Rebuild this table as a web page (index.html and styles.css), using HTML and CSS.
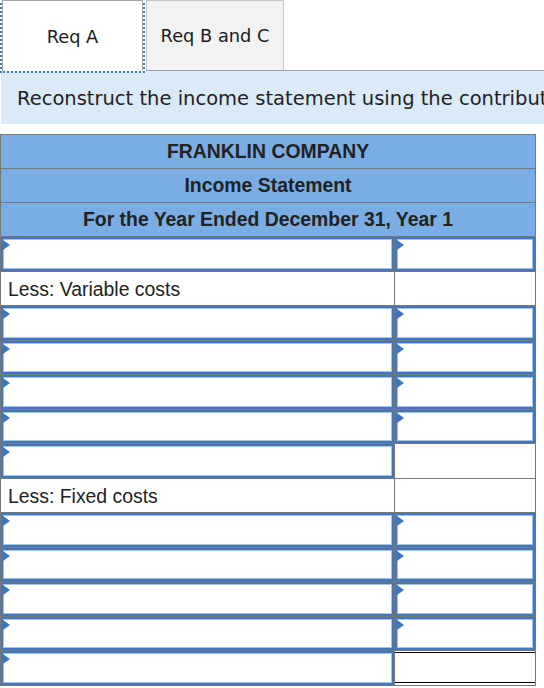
FILE: index.html
```html
<!DOCTYPE html>
<html>
<head>
<meta charset="utf-8">
<link rel="stylesheet" href="styles.css">
</head>
<body>
<div class="tabs">
  <div class="tab tab-active">Req A</div>
  <div class="tab tab-idle">Req B and C</div>
  <div class="tab-rest"></div>
</div>
<div class="info">Reconstruct the income statement using the contribution margin approach.</div>
<table class="stmt">
  <colgroup><col class="c1"><col class="c2"></colgroup>
  <tr class="hd"><td colspan="2">FRANKLIN COMPANY</td></tr>
  <tr class="hd"><td colspan="2">Income Statement</td></tr>
  <tr class="hd"><td colspan="2">For the Year Ended December 31, Year 1</td></tr>
  <tr><td class="in"><div class="box"></div><span class="tri"></span></td><td class="in"><div class="box"></div><span class="tri"></span></td></tr>
  <tr><td class="lbl">Less: Variable costs</td><td></td></tr>
  <tr><td class="in"><div class="box"></div><span class="tri"></span></td><td class="in"><div class="box"></div><span class="tri"></span></td></tr>
  <tr><td class="in"><div class="box"></div><span class="tri"></span></td><td class="in"><div class="box"></div><span class="tri"></span></td></tr>
  <tr><td class="in"><div class="box"></div><span class="tri"></span></td><td class="in"><div class="box"></div><span class="tri"></span></td></tr>
  <tr><td class="in"><div class="box"></div><span class="tri"></span></td><td class="in"><div class="box"></div><span class="tri"></span></td></tr>
  <tr><td class="in"><div class="box"></div><span class="tri"></span></td><td></td></tr>
  <tr><td class="lbl">Less: Fixed costs</td><td></td></tr>
  <tr><td class="in"><div class="box"></div><span class="tri"></span></td><td class="in"><div class="box"></div><span class="tri"></span></td></tr>
  <tr><td class="in"><div class="box"></div><span class="tri"></span></td><td class="in"><div class="box"></div><span class="tri"></span></td></tr>
  <tr><td class="in"><div class="box"></div><span class="tri"></span></td><td class="in"><div class="box"></div><span class="tri"></span></td></tr>
  <tr><td class="in"><div class="box"></div><span class="tri"></span></td><td class="in"><div class="box"></div><span class="tri"></span></td></tr>
  <tr><td class="in"><div class="box"></div><span class="tri"></span></td><td class="total"><div class="tline"></div></td></tr>
</table>
</body>
</html>
```
FILE: styles.css
```css
html, body {
  margin: 0;
  padding: 0;
  background: #fff;
  overflow: hidden;
}
body {
  width: 544px;
  height: 688px;
  font-family: "DejaVu Sans", Verdana, sans-serif;
  color: #1a1a1a;
}
.tabs {
  display: flex;
  align-items: flex-end;
  height: 71px;
}
.tab {
  box-sizing: border-box;
  display: flex;
  align-items: center;
  justify-content: center;
  font-size: 17.8px;
}
.tab-active {
  width: 141px;
  height: 71px;
  margin-left: 2px;
  border: 1px solid #a6a6a6;
  border-bottom: none;
  background: #fff;
  outline: 2px dotted #3f7bc5;
  outline-offset: 0;
  padding-top: 1px;
}
.tab-idle {
  width: 138px;
  height: 71px;
  margin-left: 3px;
  border: 1px solid #c6c6c6;
  border-bottom: 1px solid #a0a0a0;
  background: #f2f2f2;
}
.tab-rest {
  flex: 1;
  height: 71px;
  box-sizing: border-box;
  border-bottom: 1px solid #a0a0a0;
}
.info {
  margin-left: 1px;
  height: 53px;
  background: #dbeaf8;
  padding-left: 16px;
  box-sizing: border-box;
  display: flex;
  align-items: center;
  font-size: 19.5px;
  white-space: nowrap;
  overflow: hidden;
  color: #222;
  padding-top: 1px;
}
.stmt {
  margin-top: 10px;
  border-collapse: collapse;
  table-layout: fixed;
  width: 535px;
  font-family: "Liberation Sans", Arial, sans-serif;
  font-size: 19.4px;
  color: #222;
}
.c1 { width: 394px; }
.c2 { width: 141px; }
.stmt td {
  border: 1px solid #777;
  padding: 0;
  height: 33.5px;
  position: relative;
}
.hd td {
  background: #79ade3;
  text-align: center;
  font-weight: bold;
  height: 33px;
}
.stmt td.lbl {
  padding-left: 7px;
  padding-top: 2px;
  box-sizing: border-box;
}
.in .box {
  position: absolute;
  inset: 0;
  border: 2px solid #4377bd;
  box-shadow: inset 0 0 0 1px #a4c3ea;
}
.tri {
  position: absolute;
  left: 2px;
  top: 3px;
  width: 0;
  height: 0;
  border-top: 5px solid transparent;
  border-bottom: 5px solid transparent;
  border-left: 7px solid #3a77c2;
}
.total .tline {
  position: absolute;
  left: 0;
  right: 0;
  top: 1px;
  bottom: 2px;
  border-top: 1px solid #000;
  border-bottom: 1px solid #000;
}
```
